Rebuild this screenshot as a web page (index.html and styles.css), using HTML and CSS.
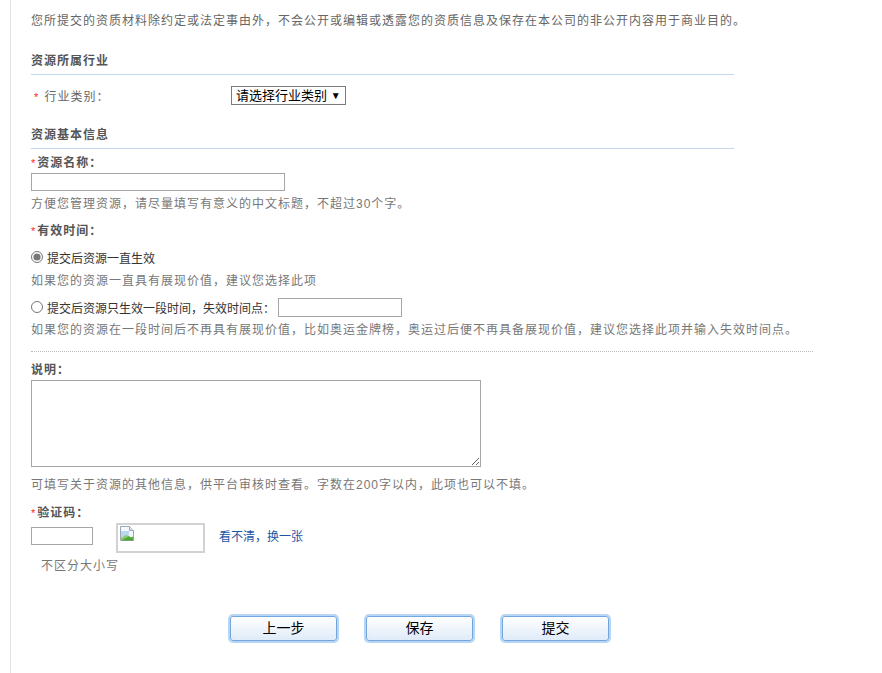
FILE: index.html
```html
<!DOCTYPE html>
<html lang="zh-CN">
<head>
<meta charset="utf-8">
<title>资源信息</title>
<link rel="stylesheet" href="styles.css">
</head>
<body>
<div class="page">
  <p class="intro">您所提交的资质材料除约定或法定事由外，不会公开或编辑或透露您的资质信息及保存在本公司的非公开内容用于商业目的。</p>

  <h2 class="sec-title sec-first">资源所属行业</h2>
  <div class="row-industry">
    <span class="ind-label"><span class="req">*</span> 行业类别：</span>
    <div class="fake-select">请选择行业类别 <span class="arrow">▼</span></div>
  </div>

  <h2 class="sec-title sec-second">资源基本信息</h2>

  <div class="field-label lbl-name"><span class="req">*</span>资源名称：</div>
  <input class="text-input name-input" type="text">
  <div class="hint hint-name">方便您管理资源，请尽量填写有意义的中文标题，不超过30个字。</div>

  <div class="field-label lbl-time"><span class="req">*</span>有效时间：</div>
  <label class="radio-row radio-one"><input type="radio" name="t" checked><span>提交后资源一直生效</span></label>
  <div class="hint hint-r1">如果您的资源一直具有展现价值，建议您选择此项</div>
  <label class="radio-row radio-two"><input type="radio" name="t"><span>提交后资源只生效一段时间，失效时间点：</span><input class="text-input date-input" type="text"></label>
  <div class="hint hint-r2">如果您的资源在一段时间后不再具有展现价值，比如奥运金牌榜，奥运过后便不再具备展现价值，建议您选择此项并输入失效时间点。</div>

  <div class="dotted"></div>

  <div class="field-label lbl-desc">说明：</div>
  <textarea class="desc"></textarea>
  <div class="hint hint-desc">可填写关于资源的其他信息，供平台审核时查看。字数在200字以内，此项也可以不填。</div>

  <div class="field-label lbl-code"><span class="req">*</span>验证码：</div>
  <div class="captcha-row">
    <input class="text-input code-input" type="text">
    <div class="captcha-img">
      <svg width="16" height="16" viewBox="0 0 16 16">
        <path d="M1.5 0.5h9l4 4v10h-13z" fill="#f4f8fc" stroke="#9aa7b4"/>
        <path d="M10.5 0.5v4h4" fill="#dde5ee" stroke="#9aa7b4"/>
        <path d="M2 5h8v4l-8 5z" fill="#b9d6f2"/>
        <path d="M2 14.5l7-5 3 2 2-1v4z" fill="#4da534"/>
        <path d="M2 12l5-3 3 1.5-8 4z" fill="#8cc870"/>
      </svg>
    </div>
    <a class="refresh" href="#">看不清，换一张</a>
  </div>
  <div class="case-hint">不区分大小写</div>

  <div class="buttons">
    <button class="btn" type="button">上一步</button>
    <button class="btn" type="button">保存</button>
    <button class="btn" type="button">提交</button>
  </div>
</div>
</body>
</html>
```
FILE: styles.css
```css
html, body {
  margin: 0;
  padding: 0;
  background: #fff;
}
body {
  font-family: "Liberation Sans", "Noto Sans CJK SC", sans-serif;
  font-size: 12px;
  color: #666;
}
.page {
  margin-left: 10px;
  border-left: 1px solid #e2e2e2;
  padding-left: 20px;
  min-height: 673px;
  box-sizing: border-box;
  display: flex;
  flex-direction: column;
  align-items: flex-start;
}
.intro {
  margin: 11px 0 0;
  line-height: 20px;
  letter-spacing: 1px;
  color: #666;
}
.sec-title {
  margin: 0;
  font-size: 12px;
  font-weight: bold;
  color: #555;
  line-height: 20px;
  letter-spacing: 1px;
  width: 703px;
  padding-bottom: 3px;
  border-bottom: 1px solid #c3d8ee;
}
.sec-first { margin-top: 20px; }
.sec-second { margin-top: 21px; }
.req {
  color: #f22;
  font-weight: normal;
  font-size: 11px;
  margin-right: 1px;
}
.row-industry {
  margin-top: 11px;
  display: flex;
  align-items: center;
  height: 18px;
}
.ind-label {
  width: 197px;
  padding-left: 3px;
  letter-spacing: 1px;
  color: #666;
}
.fake-select {
  box-sizing: border-box;
  height: 19px;
  width: 115px;
  border: 1px solid #7b7b7b;
  font-size: 13px;
  color: #000;
  line-height: 17px;
  padding-left: 4px;
  white-space: nowrap;
}
.arrow {
  font-size: 10px;
  vertical-align: 1px;
}
.field-label {
  line-height: 20px;
  font-weight: bold;
  color: #555;
  letter-spacing: 1px;
}
.lbl-name { margin-top: 4px; }
.lbl-time { margin-top: 7px; }
.lbl-desc { margin-top: 8px; }
.lbl-code { margin-top: 8px; }
.text-input {
  box-sizing: border-box;
  border: 1px solid #a6a6a6;
  height: 18px;
  margin: 0;
  padding: 0 3px;
  font-size: 12px;
  background: #fff;
  outline: none;
}
.name-input { width: 254px; }
.hint {
  line-height: 20px;
  letter-spacing: 1px;
  color: #777;
}
.hint-name { margin-top: 3px; }
.radio-row {
  display: flex;
  align-items: center;
  height: 20px;
  color: #333;
}
.radio-row input[type="radio"] {
  margin: 0 4px 0 0;
  width: 12px;
  height: 12px;
  accent-color: #777;
}
.radio-one { margin-top: 6px; }
.hint-r1 { margin-top: 4px; }
.radio-two { margin-top: 6px; }
.date-input {
  width: 124px;
  height: 19px;
  margin-left: 3px;
}
.hint-r2 { margin-top: 3px; }
.dotted {
  margin-top: 11px;
  width: 782px;
  border-top: 1px dotted #bbb;
}
.desc {
  display: block;
  box-sizing: border-box;
  width: 450px;
  height: 87px;
  margin: 0;
  border: 1px solid #a6a6a6;
  resize: both;
  font-size: 12px;
}
.hint-desc { margin-top: 8px; }
.captcha-row {
  display: flex;
  align-items: flex-start;
  height: 30px;
}
.code-input {
  width: 62px;
  margin-top: 4px;
}
.captcha-img {
  box-sizing: border-box;
  width: 89px;
  height: 30px;
  margin-left: 23px;
  border: 2px solid #d2d2d2;
  padding: 1px 0 0 1px;
}
.captcha-img svg {
  display: block;
}
.refresh {
  margin-left: 14px;
  margin-top: 4px;
  line-height: 20px;
  color: #1d56a6;
  text-decoration: none;
  font-size: 12px;
}
.case-hint {
  margin-top: 3px;
  padding-left: 10px;
  line-height: 20px;
  letter-spacing: 1px;
  color: #777;
}
.buttons {
  margin-top: 40px;
  padding-left: 199px;
  display: flex;
  gap: 29px;
}
.btn {
  box-sizing: border-box;
  width: 107px;
  height: 25px;
  border: 1px solid #73a6dc;
  border-radius: 3px;
  box-shadow: 0 0 0 2px #b8d6f3;
  background: linear-gradient(#ffffff, #dfebf9);
  font-family: "Liberation Sans", "Noto Sans CJK SC", sans-serif;
  font-size: 14px;
  color: #000;
  padding: 0;
  line-height: 23px;
  cursor: pointer;
}
```
